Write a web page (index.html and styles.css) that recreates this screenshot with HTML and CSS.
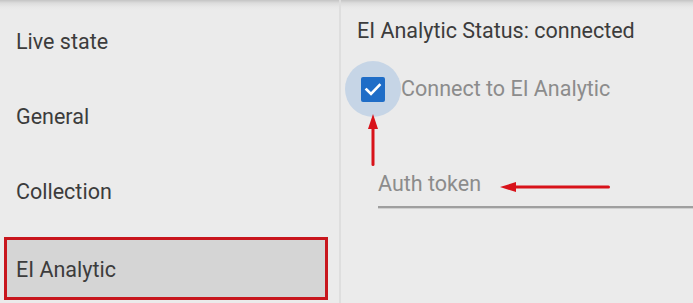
FILE: index.html
```html
<!DOCTYPE html>
<html>
<head>
<meta charset="utf-8">
<link rel="stylesheet" href="styles.css">
</head>
<body>
<div class="app">
  <nav class="sidebar">
    <div class="item">Live state</div>
    <div class="item">General</div>
    <div class="item">Collection</div>
    <div class="item selected">EI Analytic</div>
  </nav>
  <main class="main">
    <div class="title">EI Analytic Status: connected</div>
    <div class="check-row">
      <div class="ripple">
        <div class="box">
          <svg width="24" height="24" viewBox="0 0 24 24"><polyline points="5.5,12.5 10,17 18.5,8" fill="none" stroke="#fff" stroke-width="2.6" stroke-linecap="square"/></svg>
        </div>
      </div>
      <span class="check-label">Connect to EI Analytic</span>
    </div>
    <div class="field"><span class="field-label">Auth token</span></div>
  </main>
</div>
<svg class="arrow-up" width="12" height="52" viewBox="0 0 12 52"><polygon points="6,0 11,15 1,15" fill="#d8121a"/><rect x="4.5" y="12" width="3" height="40" rx="1.5" fill="#d8121a"/></svg>
<svg class="arrow-left" width="112" height="12" viewBox="0 0 112 12"><polygon points="0,6 16,1 16,11" fill="#d8121a"/><rect x="12" y="4.5" width="98" height="3" rx="1.5" fill="#d8121a"/></svg>
</body>
</html>
```
FILE: styles.css
```css
html, body {
  margin: 0;
  padding: 0;
}
body {
  width: 693px;
  height: 303px;
  overflow: hidden;
  background: #ebebeb;
  font-family: Roboto, "Liberation Sans", sans-serif;
  position: relative;
}
.app {
  display: flex;
  height: 303px;
  background-image: linear-gradient(to bottom, #c4c4c4 0px, #dcdcdc 3px, #e8e8e8 7px, rgba(235,235,235,0) 10px);
}
.sidebar {
  width: 341px;
  flex: none;
  border-right: 2px solid #dedede;
  padding-top: 4px;
  box-sizing: border-box;
}
.item {
  height: 75px;
  display: flex;
  align-items: center;
  padding-left: 16px;
  font-size: 21.5px;
  color: #3c3c3c;
}
.item.selected {
  height: 63px;
  box-sizing: border-box;
  margin: 8px 11px 0 4px;
  padding-left: 9px;
  padding-top: 1px;
  border: 3px solid #c8161d;
  background: #d5d5d5;
}
.main {
  flex: 1;
  padding-left: 16px;
}
.title {
  margin-top: 19px;
  font-size: 21.5px;
  line-height: 24px;
  color: #3c3c3c;
}
.check-row {
  display: flex;
  align-items: center;
  margin-top: 18px;
  margin-left: -12px;
}
.ripple {
  width: 56px;
  height: 56px;
  border-radius: 50%;
  background: #c6d5e6;
  display: flex;
  align-items: center;
  justify-content: center;
  flex: none;
}
.box {
  width: 24px;
  height: 25px;
  border-radius: 2px;
  background: #1f6dc7;
  display: flex;
  align-items: center;
  justify-content: center;
}
.check-label {
  font-size: 21.5px;
  color: #8c8c8c;
  margin-top: -1px;
}
.field {
  margin-top: 55px;
  margin-left: 21px;
  padding-bottom: 10px;
  border-bottom: 2px solid #9f9f9f;
  box-shadow: 0 1px 0 #d0d0d0;
}
.field-label {
  display: block;
  font-size: 21.5px;
  line-height: 24px;
  color: #8c8c8c;
}
.arrow-up {
  position: absolute;
  left: 367px;
  top: 114px;
}
.arrow-left {
  position: absolute;
  left: 500px;
  top: 181px;
}
```
